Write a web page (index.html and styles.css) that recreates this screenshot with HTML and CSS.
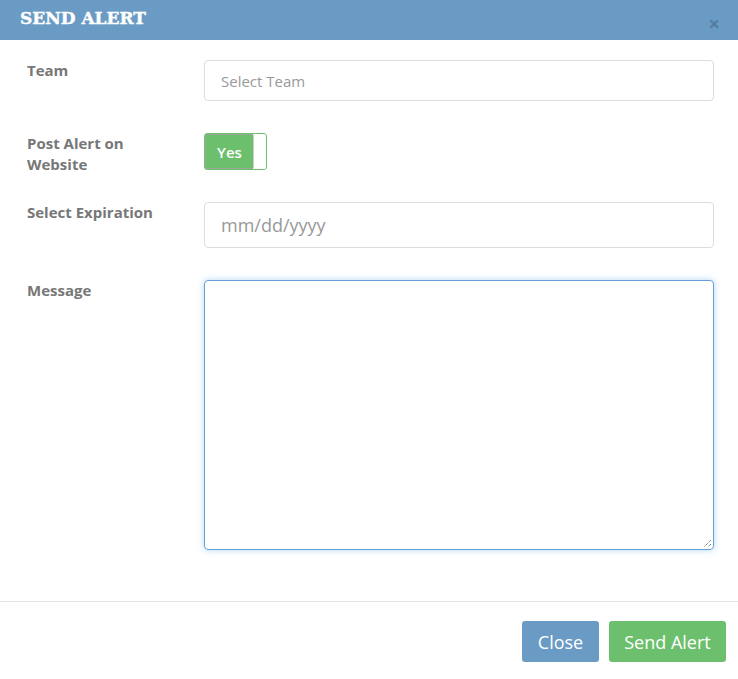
FILE: index.html
```html
<!DOCTYPE html>
<html>
<head>
<meta charset="utf-8">
<link rel="stylesheet" href="styles.css">
</head>
<body>
<div class="modal">
  <div class="modal-header">
    <h4 class="modal-title">SEND ALERT</h4>
    <span class="close">&times;</span>
  </div>
  <div class="modal-body">
    <div class="row">
      <label class="label">Team</label>
      <div class="field"><div class="input input-team">Select Team</div></div>
    </div>
    <div class="row">
      <label class="label">Post Alert on Website</label>
      <div class="field">
        <div class="toggle"><span class="toggle-on">Yes</span><span class="toggle-knob"></span></div>
      </div>
    </div>
    <div class="row">
      <label class="label">Select Expiration</label>
      <div class="field"><div class="input input-date">mm/dd/yyyy</div></div>
    </div>
    <div class="row">
      <label class="label">Message</label>
      <div class="field"><div class="textarea"><svg class="grip" width="10" height="10" viewBox="0 0 10 10"><path d="M9 2L2 9M9 6L6 9" stroke="#555" stroke-width="1" stroke-dasharray="1 1"/></svg></div></div>
    </div>
  </div>
  <div class="modal-footer">
    <button class="btn btn-close">Close</button>
    <button class="btn btn-send">Send Alert</button>
  </div>
</div>
</body>
</html>
```
FILE: styles.css
```css
html, body { margin: 0; padding: 0; background: #fff; }
body { font-family: "Open Sans", sans-serif; width: 738px; height: 679px; overflow: hidden; }
.modal { display: flex; flex-direction: column; height: 679px; }
.modal-header {
  flex-shrink: 0;
  height: 40px; background: #6a9bc4; display: flex; align-items: center;
  justify-content: space-between; padding: 0 18px 0 20px; box-sizing: border-box;
}
.modal-title {
  margin: 0; color: #fff; font-family: "DejaVu Serif", serif; font-weight: bold;
  font-size: 17px; letter-spacing: 0; line-height: 1; margin-top: -4px;
  -webkit-text-stroke: 0.4px #fff;
}
.close { color: #4f7596; font-size: 20px; font-weight: bold; line-height: 1; margin-top: 8px; opacity: 0.8; }
.modal-body { padding: 20px 24px 0 27px; flex-shrink: 0; }
.row { display: grid; grid-template-columns: 177px 510px; align-items: start; margin-bottom: 32px; }
.label {
  font-size: 15px; font-weight: bold; color: #777; line-height: 21px; max-width: 135px;
  margin-bottom: -10px;
}
.input {
  box-sizing: border-box; border: 1px solid #ddd; border-radius: 4px; color: #999;
  padding-left: 16px; display: flex; align-items: center;
}
.input-team { height: 41px; font-size: 15px; }
.input-date { height: 46px; font-size: 18px; }
.toggle {
  width: 63px; height: 37px; box-sizing: border-box; border: 1px solid #6cbf6c; border-radius: 3px;
  display: flex; overflow: hidden; background: #fff;
}
.toggle-on {
  width: 48px; background: #6cbf6c; color: #fff; font-weight: 600; font-size: 15px;
  display: flex; align-items: center; justify-content: center; box-sizing: border-box;
  border: 1px solid #9aa99a; border-right: none;
}
.toggle-knob { flex: 1; background: #fff; border-left: 1px solid #ccc; border-radius: 3px; }
.textarea {
  box-sizing: border-box; height: 270px; border: 1px solid #66a0d6; border-radius: 4px;
  box-shadow: 0 0 6px rgba(102,175,233,0.5); position: relative; margin-bottom: 18px;
}
.grip { position: absolute; right: 1px; bottom: 1px; }
.modal-footer {
  flex-shrink: 0;
  margin-top: auto; border-top: 1px solid #e5e5e5; height: 78px; box-sizing: border-box;
  display: flex; justify-content: flex-end; align-items: flex-start; padding: 19px 12px 0 0; gap: 10px;
}
.btn {
  border: none; border-radius: 3px; color: #fff; font-family: "Open Sans", sans-serif;
  font-size: 18px; height: 41px; padding: 0; cursor: pointer;
}
.btn-close { background: #6a9bc4; width: 77px; }
.btn-send { background: #6cbf6c; width: 117px; }
```
